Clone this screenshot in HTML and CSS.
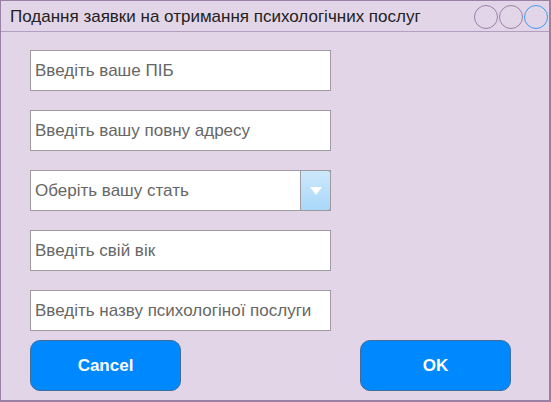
FILE: index.html
```html
<!DOCTYPE html>
<html lang="uk">
<head>
<meta charset="utf-8">
<link rel="stylesheet" href="styles.css">
</head>
<body>
<div class="window">
  <div class="titlebar">
    <span class="title">Подання заявки на отримання психологічних послуг</span>
    <div class="controls">
      <span class="dot"></span>
      <span class="dot"></span>
      <span class="dot active"></span>
    </div>
  </div>
  <div class="content">
    <div class="field">Введіть ваше ПІБ</div>
    <div class="field">Введіть вашу повну адресу</div>
    <div class="field select">
      <span class="select-text">Оберіть вашу стать</span>
      <span class="arrow"><svg width="14" height="10" viewBox="0 0 14 10"><polygon points="1,1 13,1 7,9" fill="#fff"/></svg></span>
    </div>
    <div class="field">Введіть свій вік</div>
    <div class="field">Введіть назву психологіної послуги</div>
    <div class="buttons">
      <button class="btn">Cancel</button>
      <button class="btn">OK</button>
    </div>
  </div>
</div>
</body>
</html>
```
FILE: styles.css
```css
html, body {
  margin: 0;
  padding: 0;
}
body {
  width: 551px;
  height: 402px;
  font-family: "Liberation Sans", Arial, sans-serif;
}
.window {
  box-sizing: border-box;
  width: 551px;
  height: 402px;
  background: #e3d5e8;
  border: 2px solid #9b80a6;
  border-top-width: 1px;
  border-left-width: 1px;
}
.titlebar {
  box-sizing: border-box;
  height: 31px;
  border-bottom: 1px solid #b59fbf;
  display: flex;
  align-items: center;
  justify-content: space-between;
  padding-left: 9px;
  padding-right: 1px;
}
.title {
  font-size: 17px;
  color: #222;
  margin-top: 1px;
}
.controls {
  display: flex;
  gap: 1px;
  margin-top: 1px;
}
.dot {
  box-sizing: border-box;
  width: 24px;
  height: 24px;
  border-radius: 50%;
  border: 1px solid #9a7fa6;
}
.dot.active {
  border-color: #3d9bf0;
}
.content {
  padding: 18px 0 0 29px;
  display: flex;
  flex-direction: column;
  gap: 19px;
}
.field {
  box-sizing: border-box;
  width: 301px;
  height: 41px;
  background: #fff;
  border: 1px solid #9e9aa0;
  font-size: 17px;
  color: #666;
  padding-left: 4px;
  display: flex;
  align-items: center;
}
.select {
  padding-right: 0;
  justify-content: space-between;
}
.arrow {
  box-sizing: border-box;
  width: 31px;
  height: 41px;
  margin: -1px -1px -1px 0;
  border: 1px solid #9e9aa0;
  border-radius: 0 3px 3px 0;
  background: linear-gradient(#cde8fb, #a9d8fb);
  display: flex;
  align-items: center;
  justify-content: center;
}
.arrow svg {
  display: block;
  margin-top: 1px;
}
.buttons {
  display: flex;
  gap: 179px;
  margin-top: -10px;
}
.btn {
  box-sizing: border-box;
  width: 151px;
  height: 51px;
  background: #0088fe;
  border: 1px solid #3f6e9c;
  border-radius: 10px;
  color: #fff;
  font-family: "Liberation Sans", Arial, sans-serif;
  font-weight: bold;
  font-size: 17px;
  padding: 0;
}
```
